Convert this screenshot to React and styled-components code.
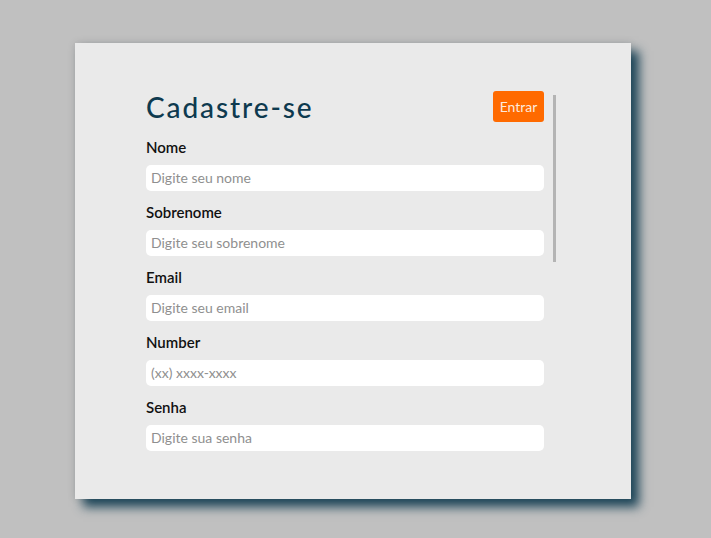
import React from "react";
import styled, { createGlobalStyle } from "styled-components";

const Global = createGlobalStyle`
  html, body { margin: 0; padding: 0; background: #c0c0c0; }
  body { font-family: "Lato", "Noto Sans", sans-serif; }
  * { box-sizing: border-box; }
`;

const Page = styled.div`
  width: 711px;
  height: 538px;
  padding: 43px 0 0 75px;
  background: #c0c0c0;
`;

const Card = styled.div`
  width: 556px;
  height: 456px;
  background: #eaeaea;
  box-shadow: 8px 8px 10px #1e4659, 0 0 8px rgba(0, 0, 0, 0.12);
  padding: 48px 75px 0 71px;
`;

const ScrollArea = styled.div`
  display: flex;
  height: 360px;
  gap: 9px;
`;

const Viewport = styled.div`
  flex: 1;
  min-width: 0;
  overflow: hidden;
`;

const Track = styled.div`
  width: 3px;
  flex: none;
  padding-top: 4px;
`;

const Thumb = styled.div`
  width: 3px;
  height: 167px;
  background: #b4b4b4;
`;

const Form = styled.form`
  display: flex;
  flex-direction: column;
`;

const Header = styled.div`
  display: flex;
  align-items: center;
  justify-content: space-between;
  height: 31px;
  margin-bottom: 16px;
`;

const Title = styled.h1`
  margin: 0;
  font-family: "Lato", sans-serif;
  font-weight: 500;
  font-size: 28px;
  line-height: 30px;
  letter-spacing: 1.9px;
  color: #0e3a4f;
`;

const LoginButton = styled.button`
  width: 51px;
  height: 31px;
  border: none;
  border-radius: 3px;
  background: #ff6a00;
  color: #fde9dc;
  font-family: "Lato", sans-serif;
  font-size: 14px;
  padding: 0;
  cursor: pointer;
`;

const Field = styled.div`
  display: flex;
  flex-direction: column;
  & + & { margin-top: 12px; }
`;

const Label = styled.label`
  font-family: "Lato", sans-serif;
  font-weight: 600;
  font-size: 15px;
  line-height: 18px;
  color: #111;
  margin-bottom: 9px;
`;

const Input = styled.input`
  height: 26px;
  border: none;
  border-radius: 5px;
  background: #fff;
  padding: 0 5px 1px;
  font-family: "Lato", sans-serif;
  font-size: 14px;
  color: #333;
  outline: none;
  &::placeholder { color: #8f8f8f; }
`;

const fields = [
  { label: "Nome", ph: "Digite seu nome", type: "text" },
  { label: "Sobrenome", ph: "Digite seu sobrenome", type: "text" },
  { label: "Email", ph: "Digite seu email", type: "email" },
  { label: "Number", ph: "(xx) xxxx-xxxx", type: "tel" },
  { label: "Senha", ph: "Digite sua senha", type: "password" },
];

export default function App() {
  return (
    <>
      <Global />
      <Page>
        <Card>
          <ScrollArea>
            <Viewport>
              <Form onSubmit={(e) => e.preventDefault()}>
                <Header>
                  <Title>Cadastre-se</Title>
                  <LoginButton type="button">Entrar</LoginButton>
                </Header>
                {fields.map((f) => (
                  <Field key={f.label}>
                    <Label>{f.label}</Label>
                    <Input type={f.type} placeholder={f.ph} />
                  </Field>
                ))}
              </Form>
            </Viewport>
            <Track>
              <Thumb />
            </Track>
          </ScrollArea>
        </Card>
      </Page>
    </>
  );
}
